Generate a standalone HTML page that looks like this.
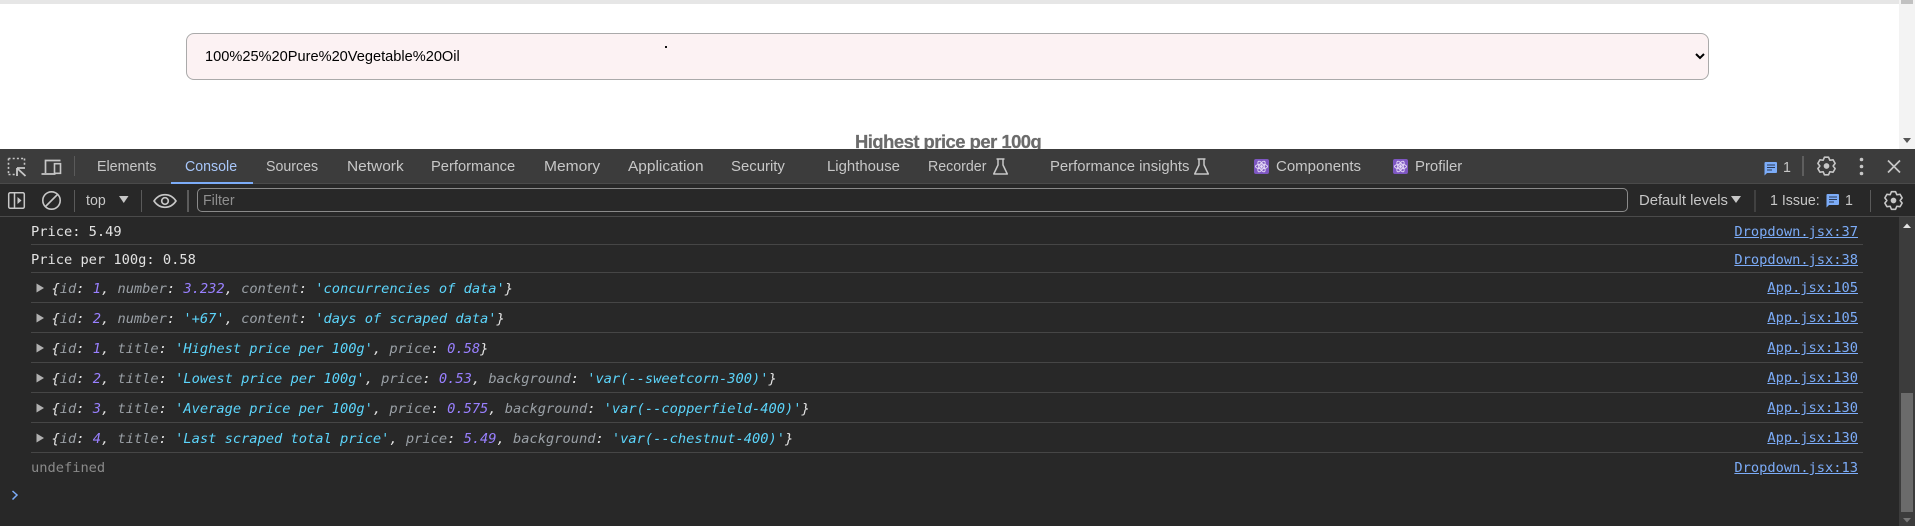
<!DOCTYPE html>
<html lang="en">
<head>
<meta charset="utf-8">
<title>DevTools Console</title>
<style>
html,body{margin:0;padding:0;width:1915px;height:526px;overflow:hidden;background:#fff}
body{position:relative;font-family:"Liberation Sans",sans-serif}
.a{position:absolute;white-space:pre}
#top{position:absolute;left:0;top:0;width:1915px;height:4px;background:#e6e6e6}
#pagescroll{position:absolute;left:1899px;top:0;width:16px;height:149px;background:#f3f3f3}
#pagethumb{position:absolute;left:1901px;top:0;width:12px;height:4px;background:#c1c1c1}
#sel{position:absolute;left:186px;top:33px;width:1523px;height:47px;box-sizing:border-box;background:#fcf2f3;border:1px solid #aaa;border-radius:8px;font:14.6px "Liberation Sans",sans-serif;color:#000;padding:0 0 0 14px;margin:0;outline:0}
#dot{position:absolute;left:665px;top:46px;width:2px;height:2px;background:#111}
#heading{position:absolute;left:855px;top:130px;width:200px;height:19px;overflow:hidden;font:bold 18.4px/24px "Liberation Sans",sans-serif;color:#6b6b6b;letter-spacing:-.5px;-webkit-text-stroke:.25px #6b6b6b;white-space:pre}
#dev{position:absolute;left:0;top:149px;width:1915px;height:377px;background:#282828}
#bar1{position:absolute;left:0;top:149px;width:1915px;height:34px;background:#3c3c3c}
#line1{position:absolute;left:0;top:183px;width:1915px;height:1px;background:#4a4a4a}
#line2{position:absolute;left:0;top:216px;width:1915px;height:1px;background:#4a4a4a}
#active{position:absolute;left:171px;top:182px;width:82px;height:2px;background:#7cacf8}
.t{top:157px;font-size:15px;line-height:20px;color:#c7c7c7;transform-origin:0 50%;transform:scaleX(.947)}
.t2{top:191px;font-size:15px;line-height:20px;color:#c7c7c7;transform-origin:0 50%;transform:scaleX(.947)}
#filter{position:absolute;left:197px;top:188px;width:1431px;height:24px;box-sizing:border-box;border:1px solid #8a8a8a;border-radius:5px}
.sep{position:absolute;left:31px;width:1832px;height:1px;background:#464646}
.m{font-family:"DejaVu Sans Mono","Liberation Mono",monospace;font-size:13.7px;line-height:20px;color:#e3e3e3}
.link{right:57px;color:#7cacf8;text-decoration:underline;font-family:"DejaVu Sans Mono","Liberation Mono",monospace;font-size:13.7px;line-height:20px;position:absolute;white-space:pre}
.o{left:51.5px;font-style:italic}
.k{color:#9aa0a6}.n{color:#9980ff}.s{color:#5cd5fb}
#cscroll{position:absolute;left:1899px;top:217px;width:16px;height:309px;background:#3c3c3c}
#cthumb{position:absolute;left:1901px;top:393px;width:12px;height:119px;background:#6b6b6b}
svg{position:absolute;left:0;top:0}
</style>
</head>
<body>
<div id="top"></div>
<div id="pagescroll"></div>
<div id="pagethumb"></div>
<select id="sel"><option>100%25%20Pure%20Vegetable%20Oil</option></select>
<div id="dot"></div>
<div id="heading">Highest price per 100g</div>

<div id="dev"></div>
<div id="bar1"></div>
<div id="line1"></div>
<div id="line2"></div>
<div id="active"></div>

<span class="a t" style="left:97px;transform:scaleX(.95)">Elements</span>
<span class="a t" style="left:185px;color:#a8c7fa">Console</span>
<span class="a t" style="left:266px">Sources</span>
<span class="a t" style="left:346.5px;transform:scaleX(1.03)">Network</span>
<span class="a t" style="left:431px;transform:scaleX(.98)">Performance</span>
<span class="a t" style="left:544px;transform:scaleX(1.037)">Memory</span>
<span class="a t" style="left:628px;transform:scaleX(1.03)">Application</span>
<span class="a t" style="left:731px;transform:scaleX(.994)">Security</span>
<span class="a t" style="left:826.5px;transform:scaleX(.994)">Lighthouse</span>
<span class="a t" style="left:928px">Recorder</span>
<span class="a t" style="left:1050px;transform:scaleX(.99)">Performance insights</span>
<span class="a t" style="left:1276px;transform:scaleX(1)">Components</span>
<span class="a t" style="left:1415px;transform:scaleX(.994)">Profiler</span>
<span class="a t" style="left:1783px;top:158px">1</span>

<span class="a t2" style="left:86px">top</span>
<div id="filter"></div>
<span class="a t2" style="left:203px;color:#8f8f8f">Filter</span>
<span class="a t2" style="left:1639px;transform:scaleX(.988)">Default levels</span>
<span class="a t2" style="left:1770px">1 Issue:</span>
<span class="a t2" style="left:1845px">1</span>

<div class="sep" style="top:244px"></div>
<div class="sep" style="top:272px"></div>
<div class="sep" style="top:302px"></div>
<div class="sep" style="top:332px"></div>
<div class="sep" style="top:362px"></div>
<div class="sep" style="top:392px"></div>
<div class="sep" style="top:422px"></div>
<div class="sep" style="top:452px"></div>

<span class="a m" style="left:31px;top:222px">Price: 5.49</span>
<span class="a m" style="left:31px;top:250px">Price per 100g: 0.58</span>
<span class="a m o" style="top:279px">{<span class="k">id</span>: <span class="n">1</span>, <span class="k">number</span>: <span class="n">3.232</span>, <span class="k">content</span>: <span class="s">'concurrencies of data'</span>}</span>
<span class="a m o" style="top:309px">{<span class="k">id</span>: <span class="n">2</span>, <span class="k">number</span>: <span class="s">'+67'</span>, <span class="k">content</span>: <span class="s">'days of scraped data'</span>}</span>
<span class="a m o" style="top:339px">{<span class="k">id</span>: <span class="n">1</span>, <span class="k">title</span>: <span class="s">'Highest price per 100g'</span>, <span class="k">price</span>: <span class="n">0.58</span>}</span>
<span class="a m o" style="top:369px">{<span class="k">id</span>: <span class="n">2</span>, <span class="k">title</span>: <span class="s">'Lowest price per 100g'</span>, <span class="k">price</span>: <span class="n">0.53</span>, <span class="k">background</span>: <span class="s">'var(--sweetcorn-300)'</span>}</span>
<span class="a m o" style="top:399px">{<span class="k">id</span>: <span class="n">3</span>, <span class="k">title</span>: <span class="s">'Average price per 100g'</span>, <span class="k">price</span>: <span class="n">0.575</span>, <span class="k">background</span>: <span class="s">'var(--copperfield-400)'</span>}</span>
<span class="a m o" style="top:429px">{<span class="k">id</span>: <span class="n">4</span>, <span class="k">title</span>: <span class="s">'Last scraped total price'</span>, <span class="k">price</span>: <span class="n">5.49</span>, <span class="k">background</span>: <span class="s">'var(--chestnut-400)'</span>}</span>
<span class="a m" style="left:31px;top:458px;color:#8a8a8a">undefined</span>

<span class="link" style="top:222px">Dropdown.jsx:37</span>
<span class="link" style="top:250px">Dropdown.jsx:38</span>
<span class="link" style="top:278px">App.jsx:105</span>
<span class="link" style="top:308px">App.jsx:105</span>
<span class="link" style="top:338px">App.jsx:130</span>
<span class="link" style="top:368px">App.jsx:130</span>
<span class="link" style="top:398px">App.jsx:130</span>
<span class="link" style="top:428px">App.jsx:130</span>
<span class="link" style="top:458px">Dropdown.jsx:13</span>

<div id="cscroll"></div>
<div id="cthumb"></div>

<svg width="1915" height="526" viewBox="0 0 1915 526" fill="none">
  <path d="M1903 138h8l-4 5z" fill="#555"/>
  <path d="M1903 228h8l-4-4.5z" fill="#e3e3e3"/>
  <path d="M1903 518h8l-4 4.5z" fill="#777"/>

  <path d="M8.5 158.5h16M8.5 158.500v16M8.500 174.500h8M24.500 158.500v7" stroke="#c7c7c7" stroke-width="1.6" stroke-dasharray="2 2.2"/>
  <path d="M17 168h8M17 168v8M17.600 168.600l7.900 7.400" stroke="#c7c7c7" stroke-width="1.8"/>
  <path d="M41.500 174h14M45.500 173v-12.500h15" stroke="#c7c7c7" stroke-width="1.7"/>
  <rect x="54.500" y="163.700" width="6" height="9.600" stroke="#c7c7c7" stroke-width="1.6"/>
  <path d="M74.500 156v20" stroke="#5a5a5a"/>

  <rect x="8.700" y="192.700" width="15.600" height="15.600" rx="1.500" stroke="#c7c7c7" stroke-width="1.500"/>
  <path d="M14.500 192.700v15.600" stroke="#c7c7c7" stroke-width="1.500"/>
  <path d="M17.500 197l4 3.500-4 3.500z" fill="#c7c7c7"/>
  <circle cx="51.500" cy="200.500" r="8.700" stroke="#c7c7c7" stroke-width="1.600"/>
  <path d="M45.500 206.500l12-12" stroke="#c7c7c7" stroke-width="1.600"/>
  <path d="M74.500 190v22M141.500 190v22" stroke="#5a5a5a"/>
  <path d="M188 190v22" stroke="#6a6a6a" stroke-width="1.600"/>
  <path d="M119 196h9.500l-4.750 7z" fill="#c7c7c7"/>
  <path d="M154 201c3-4.400 6.800-6.300 11-6.300s8 1.900 11 6.300c-3 4.400-6.800 6.300-11 6.300s-8-1.900-11-6.300z" stroke="#c7c7c7" stroke-width="1.600"/>
  <circle cx="165" cy="201" r="3.300" stroke="#c7c7c7" stroke-width="1.700"/>

  <g stroke="#c7c7c7" stroke-width="1.500" stroke-linejoin="round">
    <path d="M996.500 159h8M998 159v6l-4.300 9h13.600l-4.300-9v-6"/>
    <path d="M1197.500 159h8M1199 159v6l-4.300 9h13.600l-4.300-9v-6"/>
  </g>

  <g>
    <rect x="1254" y="159" width="15" height="15" rx="2" fill="#7e57c2"/>
    <g stroke="#e6dcf7" stroke-width=".9" transform="translate(1261.500 166.500)">
      <ellipse rx="6" ry="2.400"/>
      <ellipse rx="6" ry="2.400" transform="rotate(60)"/>
      <ellipse rx="6" ry="2.400" transform="rotate(120)"/>
      <circle r="1" fill="#e6dcf7"/>
    </g>
    <rect x="1393" y="159" width="15" height="15" rx="2" fill="#7e57c2"/>
    <g stroke="#e6dcf7" stroke-width=".9" transform="translate(1400.500 166.500)">
      <ellipse rx="6" ry="2.400"/>
      <ellipse rx="6" ry="2.400" transform="rotate(60)"/>
      <ellipse rx="6" ry="2.400" transform="rotate(120)"/>
      <circle r="1" fill="#e6dcf7"/>
    </g>
  </g>

  <path d="M1765.500 162h10.500a1 1 0 0 1 1 1v9a1 1 0 0 1-1 1h-9l-2.500 2.500v-12.500a1 1 0 0 1 1-1z" fill="#7cacf8"/>
  <path d="M1767 165h8M1767 167.500h8M1767 170h5" stroke="#2b3a55" stroke-width="1"/>
  <path d="M1827.500 194h10.500a1 1 0 0 1 1 1v9a1 1 0 0 1-1 1h-9l-2.500 2.500v-12.500a1 1 0 0 1 1-1z" fill="#7cacf8"/>
  <path d="M1829 197h8M1829 199.500h8M1829 202h5" stroke="#2b3a55" stroke-width="1"/>

  <path d="M1803 156v20" stroke="#6a6a6a" stroke-width="1.500"/>
  <path d="M1755 190v22M1870.500 190v22" stroke="#5a5a5a"/>

  <g stroke="#c7c7c7" stroke-width="1.700" stroke-linejoin="round" transform="translate(1826.500 166) scale(.95)">
    <path d="M-2.140-9.260L2.140-9.260 3.500-6.060 6.950-6.480 9.080-2.780 7 0 9.080 2.780 6.950 6.480 3.500 6.060 2.140 9.260-2.140 9.260-3.500 6.060-6.950 6.480-9.080 2.780-7 0-9.080-2.780-6.950-6.480-3.500-6.060Z"/>
    <circle r="3" fill="#c7c7c7" stroke="none"/>
  </g>
  <g stroke="#c7c7c7" stroke-width="1.700" stroke-linejoin="round" transform="translate(1893.500 200.500) scale(.95)">
    <path d="M-2.140-9.260L2.140-9.260 3.500-6.060 6.950-6.480 9.080-2.780 7 0 9.080 2.780 6.950 6.480 3.500 6.060 2.140 9.260-2.140 9.260-3.500 6.060-6.950 6.480-9.080 2.780-7 0-9.080-2.780-6.950-6.480-3.500-6.060Z"/>
    <circle r="3" fill="#c7c7c7" stroke="none"/>
  </g>
  <circle cx="1861.500" cy="159.500" r="1.800" fill="#c7c7c7"/>
  <circle cx="1861.500" cy="166.500" r="1.800" fill="#c7c7c7"/>
  <circle cx="1861.500" cy="173.500" r="1.800" fill="#c7c7c7"/>
  <path d="M1888 160.500l12 12M1900 160.500l-12 12" stroke="#c7c7c7" stroke-width="1.700"/>
  <path d="M1731 196h10l-5 7z" fill="#c7c7c7"/>

  <path d="M36.500 283.500l7.500 4.500-7.500 4.500z" fill="#b0b0b0"/>
  <path d="M36.500 313.500l7.500 4.500-7.500 4.500z" fill="#b0b0b0"/>
  <path d="M36.500 343.500l7.500 4.500-7.500 4.500z" fill="#b0b0b0"/>
  <path d="M36.500 373.500l7.500 4.500-7.500 4.500z" fill="#b0b0b0"/>
  <path d="M36.500 403.500l7.500 4.500-7.500 4.500z" fill="#b0b0b0"/>
  <path d="M36.500 433.500l7.500 4.500-7.500 4.500z" fill="#b0b0b0"/>

  <path d="M12.500 491l4.500 4-4.500 4.500" stroke="#7cacf8" stroke-width="1.500"/>
</svg>
</body>
</html>
